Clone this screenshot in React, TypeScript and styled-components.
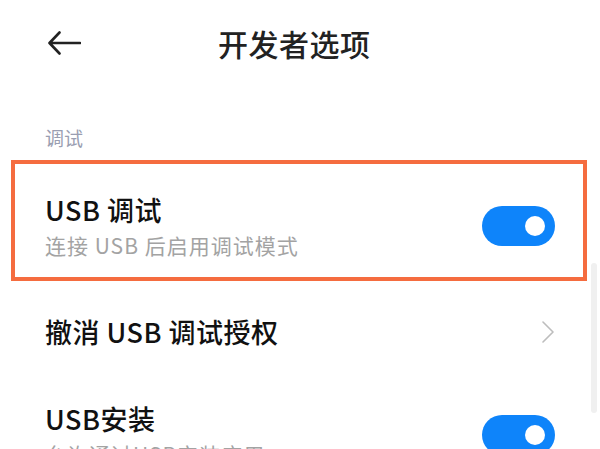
import React from 'react'
import styled, { createGlobalStyle } from 'styled-components'

const GlobalStyle = createGlobalStyle`
  html, body {
    margin: 0;
    padding: 0;
    background: #ffffff;
  }
  body {
    font-family: 'Noto Sans CJK SC', 'Noto Sans', sans-serif;
  }
`

const Page = styled.div`
  position: relative;
  width: 600px;
  height: 449px;
  overflow: hidden;
  background: #ffffff;
`

const Header = styled.header`
  display: flex;
  align-items: center;
  height: 86px;
  padding-left: 48px;
`

const BackButton = styled.button`
  display: flex;
  align-items: center;
  width: 33px;
  height: 24px;
  padding: 0;
  border: none;
  background: none;
`

const Title = styled.h1`
  margin: 0 0 0 137px;
  font-size: 30px;
  font-weight: 500;
  line-height: 40px;
  color: #222222;
  letter-spacing: 0.5px;
`

const SectionLabel = styled.div`
  height: 74px;
  box-sizing: border-box;
  padding: 39px 0 0 45px;
  font-size: 19px;
  line-height: 26px;
  color: #9a9eb1;
`

const Highlight = styled.div`
  height: 121px;
  box-sizing: border-box;
  margin: 0 13px 0 11px;
  border: 4.5px solid #f56c3f;
`

const Row = styled.div<{ $boxed?: boolean; $height?: number }>`
  display: flex;
  align-items: center;
  justify-content: space-between;
  box-sizing: border-box;
  height: ${p => (p.$height ? `${p.$height}px` : '100%')};
  padding: ${p => (p.$boxed ? '11px 28px 0 30px' : '0 46px 0 45px')};
`

const TextBlock = styled.div`
  display: flex;
  flex-direction: column;
  gap: 4px;
`

const ItemTitle = styled.div`
  font-size: 27px;
  font-weight: 500;
  line-height: 34px;
  letter-spacing: 0.5px;
  color: #111111;
  white-space: nowrap;
`

const ItemSubtitle = styled.div`
  font-size: 21px;
  line-height: 28px;
  letter-spacing: 1px;
  color: #a3a3a3;
  white-space: nowrap;
`

const Toggle = styled.div<{ $on?: boolean }>`
  position: relative;
  flex: none;
  width: 73px;
  height: 40px;
  border-radius: 20px;
  background: ${p => (p.$on ? '#0e84fa' : '#d9d9d9')};

  &::after {
    content: '';
    position: absolute;
    top: 10px;
    right: ${p => (p.$on ? '10px' : '43px')};
    width: 20px;
    height: 20px;
    border-radius: 50%;
    background: #ffffff;
  }
`

const Chevron = styled.svg`
  flex: none;
  width: 12px;
  height: 22px;
`

const ScrollThumb = styled.div`
  position: absolute;
  top: 263px;
  right: 3px;
  width: 6px;
  height: 150px;
  border-radius: 3px;
  background: #f0f0f0;
`

export default function App() {
  return (
    <>
      <GlobalStyle />
      <Page>
        <Header>
          <BackButton aria-label="返回">
            <svg width="33" height="24" viewBox="0 0 33 24" fill="none">
              <path
                d="M32 12H2M11.5 1.5L1.5 12l10 10.5"
                stroke="#222"
                strokeWidth="2.6"
                strokeLinecap="round"
                strokeLinejoin="round"
              />
            </svg>
          </BackButton>
          <Title>开发者选项</Title>
        </Header>

        <SectionLabel>调试</SectionLabel>

        <Highlight>
          <Row $boxed>
            <TextBlock>
              <ItemTitle>USB 调试</ItemTitle>
              <ItemSubtitle>连接 USB 后启用调试模式</ItemSubtitle>
            </TextBlock>
            <Toggle $on />
          </Row>
        </Highlight>

        <Row $height={102}>
          <ItemTitle>撤消 USB 调试授权</ItemTitle>
          <Chevron viewBox="0 0 12 22" fill="none">
            <path d="M1 1l10 10L1 21" stroke="#bdbdbd" strokeWidth="1.6" strokeLinecap="round" strokeLinejoin="round" />
          </Chevron>
        </Row>

        <Row $height={103} style={{ paddingRight: 45 }}>
          <TextBlock>
            <ItemTitle>USB安装</ItemTitle>
            <ItemSubtitle>允许通过USB安装应用</ItemSubtitle>
          </TextBlock>
          <Toggle $on />
        </Row>

        <ScrollThumb />
      </Page>
    </>
  )
}
